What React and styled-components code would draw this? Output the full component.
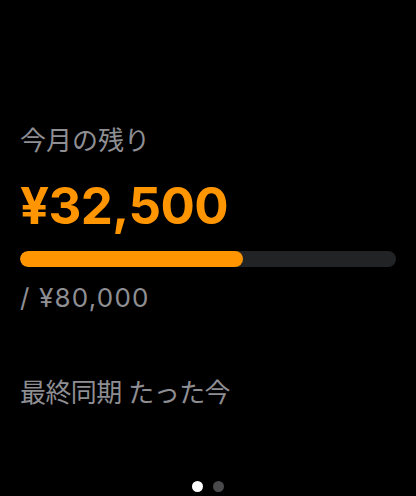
import styled, { createGlobalStyle } from 'styled-components'

const GlobalStyle = createGlobalStyle`
  html, body {
    margin: 0;
    padding: 0;
    background: #000;
  }
  body {
    font-family: Inter, "Noto Sans CJK JP", sans-serif;
  }
`;

const budget = {
  label: '今月の残り',
  remaining: 32500,
  total: 80000,
  synced: 'たった今',
};

const yen = (n) => '¥' + n.toLocaleString('en-US');

const App = () => {
  const used = (budget.total - budget.remaining) / budget.total;
  return (
    <Screen>
      <GlobalStyle />
      <Content>
        <Label>{budget.label}</Label>
        <Amount>{yen(budget.remaining)}</Amount>
        <Track>
          <Fill style={{ width: `${used * 100}%` }} />
        </Track>
        <Total>/ {yen(budget.total)}</Total>
        <Synced>最終同期 {budget.synced}</Synced>
      </Content>
      <Dots>
        <Dot $active />
        <Dot />
      </Dots>
    </Screen>
  );
};

export default App;

const Screen = styled.div`
  width: 416px;
  height: 496px;
  background: #000;
  display: flex;
  flex-direction: column;
  overflow: hidden;
`;

const Content = styled.div`
  display: flex;
  flex-direction: column;
  padding: 124px 20px 0 20px;
`;

const Label = styled.div`
  color: #8e8e93;
  font-size: 26px;
  line-height: 34px;
`;

const Amount = styled.div`
  color: #ff9500;
  font-size: 51px;
  font-weight: 700;
  line-height: 60px;
  margin-top: 18px;
  letter-spacing: -0.6px;
`;

const Track = styled.div`
  height: 16px;
  border-radius: 8px;
  background: #222325;
  margin-top: 15px;
  overflow: hidden;
`;

const Fill = styled.div`
  height: 100%;
  border-radius: 8px;
  background: #ff9500;
`;

const Total = styled.div`
  color: #8e8e93;
  font-size: 26px;
  line-height: 34px;
  margin-top: 14px;
  letter-spacing: 1.2px;
`;

const Synced = styled.div`
  color: #8e8e93;
  font-size: 26px;
  line-height: 34px;
  margin-top: 61px;
  letter-spacing: -0.6px;
`;

const Dots = styled.div`
  margin-top: auto;
  display: flex;
  justify-content: center;
  gap: 10px;
  padding-bottom: 4px;
`;

const Dot = styled.span`
  width: 11px;
  height: 11px;
  border-radius: 50%;
  background: ${(p) => (p.$active ? '#fff' : '#4a4a4c')};
`;
